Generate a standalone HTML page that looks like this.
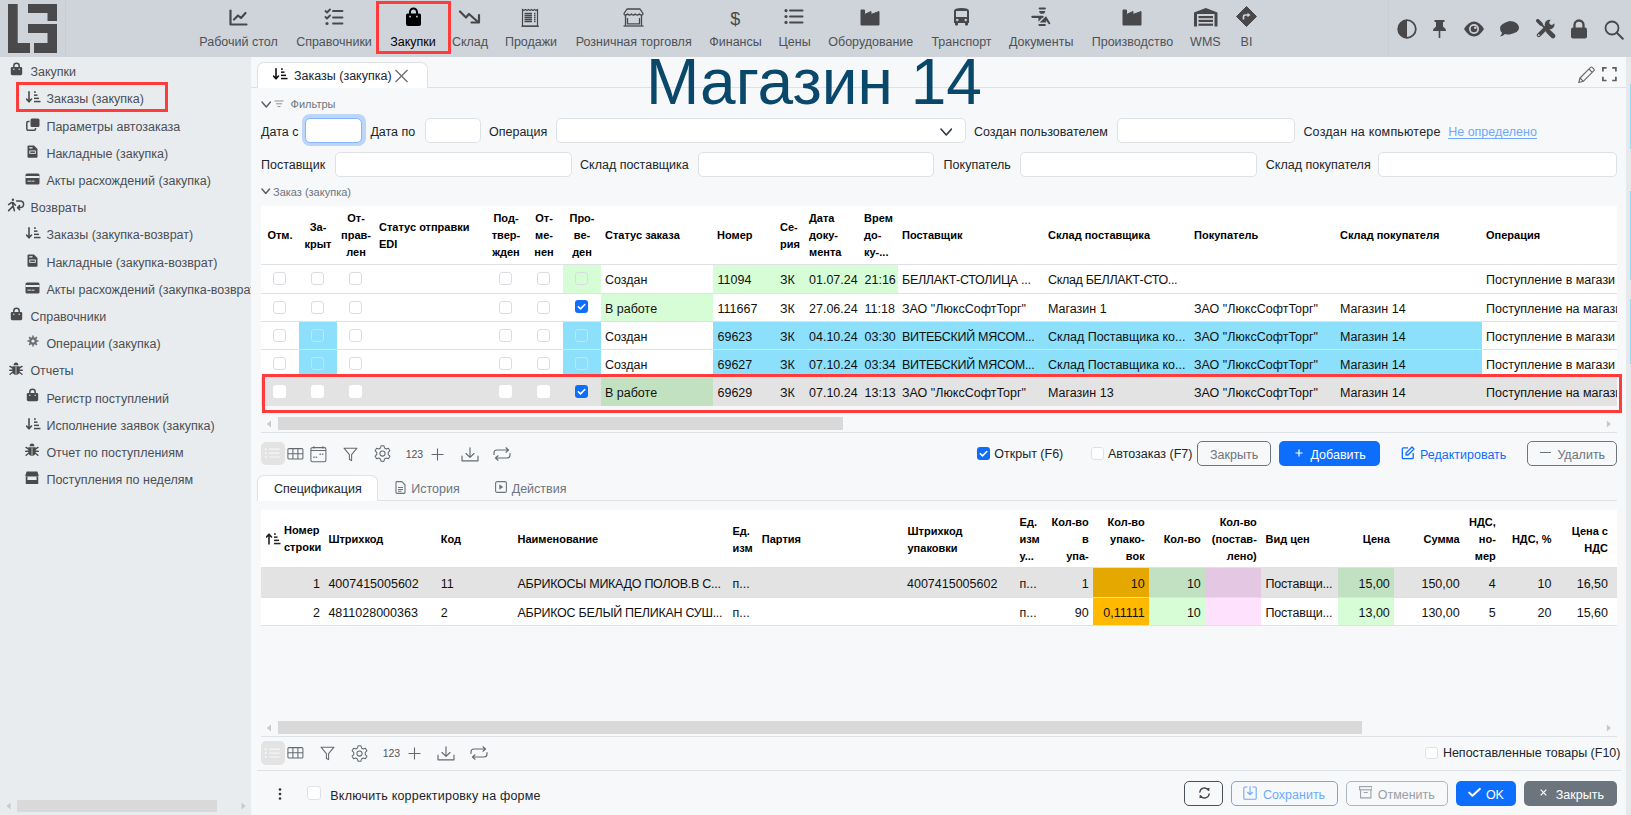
<!DOCTYPE html><html><head><meta charset="utf-8"><style>html,body{margin:0;padding:0;width:1631px;height:815px;overflow:hidden;position:relative;background:#f7f8fa;font-family:"Liberation Sans",sans-serif}.t{position:absolute;white-space:nowrap}.r{position:absolute}</style></head><body><div class="r" style="left:0px;top:0px;width:1631px;height:57px;background:#cfd4db;"></div><div class="r" style="left:0px;top:57px;width:251px;height:758px;background:#e9ecef;"></div><div class="r" style="left:251px;top:57px;width:1375px;height:758px;background:#f7f8fa;"></div><div class="r" style="left:1626px;top:57px;width:5px;height:758px;background:#e6e9ec;"></div><div class="r" style="left:1629.5px;top:84px;width:1.5px;height:65px;background:#8fdcf5;"></div><div class="r" style="left:1629.5px;top:191px;width:1.5px;height:89px;background:#8fdcf5;"></div><div class="r" style="left:1629.5px;top:299px;width:1.5px;height:65px;background:#8fdcf5;"></div><div class="r" style="left:65px;top:0px;width:1px;height:57px;background:#c9ced5;"></div><div class="r" style="left:1388px;top:0px;width:1px;height:57px;background:#c9ced5;"></div><svg class="r" style="left:8px;top:4px;" width="50" height="50" viewBox="0 0 50 50"><g fill="#4a4a4c"><rect x="0" y="0" width="9.7" height="49"/><rect x="0" y="39" width="22" height="10"/><rect x="20" y="0" width="29" height="9"/><rect x="39.5" y="0" width="9.5" height="17"/><rect x="20" y="20" width="29" height="9"/><rect x="39.5" y="20" width="9.5" height="29"/><rect x="26" y="39" width="23" height="10"/></g></svg><div class="t" style="left:168.50px;width:140px;text-align:center;top:35.92px;font-size:12.5px;line-height:12.5px;color:#4d5156;">Рабочий стол</div><div class="t" style="left:264.00px;width:140px;text-align:center;top:35.92px;font-size:12.5px;line-height:12.5px;color:#4d5156;">Справочники</div><div class="t" style="left:343.00px;width:140px;text-align:center;top:35.92px;font-size:12.5px;line-height:12.5px;color:#000;">Закупки</div><div class="t" style="left:400.00px;width:140px;text-align:center;top:35.92px;font-size:12.5px;line-height:12.5px;color:#4d5156;">Склад</div><div class="t" style="left:461.00px;width:140px;text-align:center;top:35.92px;font-size:12.5px;line-height:12.5px;color:#4d5156;">Продажи</div><div class="t" style="left:563.70px;width:140px;text-align:center;top:35.92px;font-size:12.5px;line-height:12.5px;color:#4d5156;">Розничная торговля</div><div class="t" style="left:665.50px;width:140px;text-align:center;top:35.92px;font-size:12.5px;line-height:12.5px;color:#4d5156;">Финансы</div><div class="t" style="left:724.60px;width:140px;text-align:center;top:35.92px;font-size:12.5px;line-height:12.5px;color:#4d5156;">Цены</div><div class="t" style="left:800.80px;width:140px;text-align:center;top:35.92px;font-size:12.5px;line-height:12.5px;color:#4d5156;">Оборудование</div><div class="t" style="left:891.50px;width:140px;text-align:center;top:35.92px;font-size:12.5px;line-height:12.5px;color:#4d5156;">Транспорт</div><div class="t" style="left:971.20px;width:140px;text-align:center;top:35.92px;font-size:12.5px;line-height:12.5px;color:#4d5156;">Документы</div><div class="t" style="left:1062.50px;width:140px;text-align:center;top:35.92px;font-size:12.5px;line-height:12.5px;color:#4d5156;">Производство</div><div class="t" style="left:1135.40px;width:140px;text-align:center;top:35.92px;font-size:12.5px;line-height:12.5px;color:#4d5156;">WMS</div><div class="t" style="left:1176.50px;width:140px;text-align:center;top:35.92px;font-size:12.5px;line-height:12.5px;color:#4d5156;">BI</div><svg class="r" style="left:229px;top:9px;" width="19" height="17" viewBox="0 0 19 17"><g fill="none" stroke="#48484a" stroke-width="2.2" stroke-linecap="round" stroke-linejoin="round"><path d="M1.5 1.5V15.5H17.5"/><path d="M5 10.5L9 6.5L12 9L16.5 4"/></g></svg><svg class="r" style="left:324px;top:8px;" width="20" height="18" viewBox="0 0 20 18"><g fill="none" stroke="#48484a" stroke-width="1.8" stroke-linecap="round" stroke-linejoin="round"><path d="M1.5 3L3 4.5L6 1.5"/><path d="M1.5 9L3 10.5L6 7.5"/><path d="M9 3H18.5M9 9.5H18.5M9 15.5H18.5"/></g><circle cx="3" cy="15.5" r="1.6" fill="#48484a"/></svg><svg class="r" style="left:405px;top:7px;" width="17" height="20" viewBox="0 0 17 20"><path d="M5 7V5A3.5 3.5 0 0 1 12 5V7" fill="none" stroke="#000" stroke-width="2"/><path d="M1 8Q1 6.5 2.5 6.5H14.5Q16 6.5 16 8V17Q16 19 14 19H3Q1 19 1 17Z" fill="#000"/><rect x="4.3" y="8.8" width="1.6" height="1.6" fill="#cfd4db"/><rect x="11.1" y="8.8" width="1.6" height="1.6" fill="#cfd4db"/></svg><svg class="r" style="left:458px;top:9px;" width="24" height="16" viewBox="0 0 24 16"><g fill="none" stroke="#48484a" stroke-width="2.2" stroke-linecap="round" stroke-linejoin="round"><path d="M2 2.5L8 8.5L11 5L20 13"/><path d="M13.5 13.5H21V6"/></g></svg><svg class="r" style="left:521px;top:8px;" width="19" height="19" viewBox="0 0 19 19"><g fill="none" stroke="#48484a" stroke-width="1.2"><path d="M1.5 1.5L3 2.5L4.5 1.5L6 2.5L7.5 1.5L9 2.5L10.5 1.5L12 2.5L13.5 1.5L15 2.5L16.5 1.5V18H1.5Z"/></g><g stroke="#48484a" stroke-width="1.3"><path d="M3.5 5.5H11M3.5 7.5H11M3.5 9.5H11M3.5 11.5H11M3.5 13.5H11M13 5.5H14.5M13 7.5H14.5M13 9.5H14.5M13 11.5H14.5M13 13.5H14.5"/></g><path d="M0.5 18.3H18" stroke="#48484a" stroke-width="1.2"/></svg><svg class="r" style="left:623px;top:8px;" width="21" height="19" viewBox="0 0 21 19"><g fill="none" stroke="#48484a" stroke-width="1.3" stroke-linejoin="round"><path d="M4 1H17L20 5.5Q20 7 18.3 7Q16.8 7 16.5 5.8Q16 7 14.3 7Q12.5 7 12.2 5.8Q11.8 7 10.5 7Q8.8 7 8.5 5.8Q8.2 7 6.5 7Q5 7 4.6 5.8Q4.2 7 2.6 7Q1 7 1 5.5Z"/><path d="M2.5 7V17.8M18.5 7V17.8M4.5 10V15.8H16.5V10"/><path d="M0.5 18H20.5"/></g></svg><div class="t" style="left:720.30px;width:30px;text-align:center;top:9.86px;font-size:18px;line-height:18px;color:#48484a;">$</div><svg class="r" style="left:784px;top:8px;" width="21" height="18" viewBox="0 0 21 18"><g fill="#48484a"><circle cx="2" cy="2.6" r="1.6"/><circle cx="2" cy="8.5" r="1.6"/><circle cx="2" cy="14.4" r="1.6"/></g><g stroke="#48484a" stroke-width="2" stroke-linecap="round"><path d="M6 2.6H18.5M6 8.5H18.5M6 14.4H18.5"/></g></svg><svg class="r" style="left:860px;top:8.5px;" width="21" height="17" viewBox="0 0 21 17"><path d="M1 1H4.5V5.5L11 2.5V5.5L19 2.5V16H1Z" fill="#48484a" stroke="#48484a" stroke-width="1" stroke-linejoin="round"/></svg><svg class="r" style="left:951.5px;top:7px;" width="19" height="20" viewBox="0 0 19 20"><path d="M2 4Q2 1 9.5 1Q17 1 17 4V16H2Z" fill="#48484a"/><rect x="4" y="4" width="11" height="6" fill="#cfd4db"/><circle cx="5.3" cy="13" r="1.2" fill="#cfd4db"/><circle cx="13.7" cy="13" r="1.2" fill="#cfd4db"/><rect x="3" y="15" width="3" height="3.5" rx="1" fill="#48484a"/><rect x="13" y="15" width="3" height="3.5" rx="1" fill="#48484a"/></svg><svg class="r" style="left:1026px;top:3px;" width="26" height="26" viewBox="0 0 26 26"><g fill="#48484a"><rect x="12.6" y="4.6" width="7.3" height="2" rx="1"/><path d="M13.1 7.9H19.2Q19 10.8 16.15 10.8Q13.3 10.8 13.1 7.9Z"/><rect x="5.3" y="12.7" width="12.3" height="2.2" rx="1.1"/><path d="M12.4 14.5L17.6 13.2L12.5 18.8Z"/><path d="M13.6 19.6L20 13.3L24.4 20.3Q24.3 21.6 22.9 21.3L19.9 17.2V19.6Z"/><rect x="12.4" y="21" width="7.5" height="2" rx="1"/></g></svg><svg class="r" style="left:1121.5px;top:8.5px;" width="21" height="17" viewBox="0 0 21 17"><path d="M1 1H4.5V5.5L11 2.5V5.5L19 2.5V16H1Z" fill="#48484a" stroke="#48484a" stroke-width="1" stroke-linejoin="round"/></svg><svg class="r" style="left:1192.5px;top:7px;" width="26" height="20" viewBox="0 0 26 20"><path d="M1 5.5L12.8 1L24.5 5.5V19.5H21.5V7H4V19.5H1Z" fill="#48484a"/><g fill="#48484a"><rect x="5.5" y="9" width="14.5" height="2.2"/><rect x="5.5" y="12.8" width="14.5" height="2.2"/><rect x="5.5" y="16.6" width="14.5" height="2.2"/></g></svg><svg class="r" style="left:1235.5px;top:6px;" width="21" height="21" viewBox="0 0 21 21"><path d="M10.5 0.5L20.5 10.5L10.5 20.5L0.5 10.5Z" fill="#48484a" stroke="#48484a" stroke-linejoin="round"/><path d="M7.5 13.5V10.5Q7.5 9 9 9H12" fill="none" stroke="#cfd4db" stroke-width="1.7"/><path d="M11.5 6.8L14.5 9L11.5 11.2Z" fill="#cfd4db"/></svg><div class="r" style="left:376px;top:1px;width:75px;height:53px;border:3px solid #ff3b3b;box-sizing:border-box;"></div><svg class="r" style="left:1397px;top:19px;" width="20" height="20" viewBox="0 0 20 20"><circle cx="10" cy="10" r="8.8" fill="none" stroke="#48484a" stroke-width="1.8"/><path d="M10 1.2A8.8 8.8 0 0 0 10 18.8Z" fill="#48484a"/></svg><svg class="r" style="left:1432px;top:19px;" width="15" height="20" viewBox="0 0 15 20"><path d="M2.5 1H12.5V3H11V7.5Q14 9.5 14 12H1Q1 9.5 4 7.5V3H2.5Z" fill="#48484a"/><rect x="6.7" y="12" width="1.6" height="7" fill="#48484a"/></svg><svg class="r" style="left:1462.5px;top:20px;" width="22" height="18" viewBox="0 0 22 18"><path d="M1 9Q5.5 1.5 11 1.5Q16.5 1.5 21 9Q16.5 16.5 11 16.5Q5.5 16.5 1 9Z" fill="#48484a"/><circle cx="11" cy="9" r="5" fill="#cfd4db"/><circle cx="11" cy="9" r="3.3" fill="#48484a"/><circle cx="12.3" cy="7.8" r="1.3" fill="#cfd4db"/></svg><svg class="r" style="left:1499px;top:20px;" width="21" height="18" viewBox="0 0 21 18"><path d="M10.5 1C16 1 20 4 20 8Q20 12.5 10.5 14.5Q8 14.5 6 14Q4 16 1 16.5Q3 14.5 3 12.8Q1 11 1 8Q1 4 10.5 1Z" fill="#48484a"/></svg><svg class="r" style="left:1535.5px;top:19px;" width="20" height="20" viewBox="0 0 20 20"><g stroke="#48484a" stroke-linecap="round" fill="none"><path d="M1.8 1.8L5 5" stroke-width="3.6"/><path d="M5 5L10 10" stroke-width="1.8"/><path d="M12.3 12.3L17 17" stroke-width="4.6"/><path d="M10.5 8.5L2.8 16.2" stroke-width="4"/></g><circle cx="2.8" cy="16.2" r="0.9" fill="#cfd4db"/><circle cx="13.6" cy="5.6" r="4.9" fill="#48484a"/><circle cx="15.6" cy="3.6" r="2.3" fill="#cfd4db"/><path d="M15.6 3.6L20 -0.8" stroke="#cfd4db" stroke-width="4.6"/></svg><svg class="r" style="left:1570px;top:19px;" width="18" height="20" viewBox="0 0 18 20"><path d="M4.5 9V6A4.5 4.5 0 0 1 13.5 6V9" fill="none" stroke="#48484a" stroke-width="2.3"/><rect x="1" y="8.5" width="16" height="11" rx="2" fill="#48484a"/></svg><svg class="r" style="left:1603.5px;top:19.5px;" width="20" height="20" viewBox="0 0 20 20"><circle cx="8" cy="8" r="6.5" fill="none" stroke="#48484a" stroke-width="1.8"/><path d="M12.8 12.8L18.8 18.8" stroke="#48484a" stroke-width="2" stroke-linecap="round"/></svg><div class="r" style="left:0;top:57px;width:251px;height:735px;overflow:hidden"><div class="t" style="left:30.40px;top:9.12px;font-size:12.5px;line-height:12.5px;color:#4a4f55;">Закупки</div><svg class="r" style="left:10px;top:4.900000000000006px;" width="13" height="14" viewBox="0 0 13 14"><path d="M3.8 5.5V4A2.7 2.7 0 0 1 9.2 4V5.5" fill="none" stroke="#4a4a4c" stroke-width="1.5"/><path d="M0.8 6.3Q0.8 5 2 5H11Q12.2 5 12.2 6.3V11.8Q12.2 13.2 10.8 13.2H2.2Q0.8 13.2 0.8 11.8Z" fill="#4a4a4c"/><rect x="3.2" y="6.7" width="1.2" height="1.2" fill="#e9ecef"/><rect x="8.6" y="6.7" width="1.2" height="1.2" fill="#e9ecef"/></svg><div class="t" style="left:46.40px;top:36.32px;font-size:12.5px;line-height:12.5px;color:#4a4f55;">Заказы (закупка)</div><svg class="r" style="left:25.5px;top:34.10000000000001px;" width="15" height="12" viewBox="0 0 15 12"><path d="M3 0.8V10.5M0.5 8L3 10.8L5.5 8" fill="none" stroke="#4a4a4c" stroke-width="1.6" stroke-linecap="round" stroke-linejoin="round"/><g fill="#4a4a4c"><rect x="8" y="0.3" width="1.8" height="1.5"/><rect x="8" y="3.4" width="3.5" height="1.5"/><rect x="8" y="6.6" width="5" height="1.5"/><rect x="8" y="9.8" width="6.5" height="1.5"/></g></svg><div class="t" style="left:46.40px;top:63.52px;font-size:12.5px;line-height:12.5px;color:#4a4f55;">Параметры автозаказа</div><svg class="r" style="left:25.5px;top:60.80000000000001px;" width="14" height="13" viewBox="0 0 14 13"><rect x="4.5" y="0.5" width="9" height="8.5" rx="1.5" fill="#4a4a4c"/><path d="M3.5 3.5H2Q0.8 3.5 0.8 4.8V11Q0.8 12.3 2 12.3H8.2Q9.5 12.3 9.5 11V10" fill="none" stroke="#4a4a4c" stroke-width="1.5"/></svg><div class="t" style="left:46.40px;top:90.72px;font-size:12.5px;line-height:12.5px;color:#4a4f55;">Накладные (закупка)</div><svg class="r" style="left:27.0px;top:88.0px;" width="11" height="13" viewBox="0 0 11 13"><path d="M0.5 1.5Q0.5 0.5 1.5 0.5H7L10.5 4V11.8Q10.5 12.8 9.5 12.8H1.5Q0.5 12.8 0.5 11.8Z" fill="#4a4a4c"/><rect x="2.3" y="5.5" width="6.5" height="3.3" fill="#e9ecef"/><rect x="3.2" y="6.4" width="4.7" height="1.5" fill="#4a4a4c"/><rect x="2.3" y="2.2" width="3.2" height="1.3" fill="#e9ecef"/></svg><div class="t" style="left:46.40px;top:117.92px;font-size:12.5px;line-height:12.5px;color:#4a4f55;">Акты расхождений (закупка)</div><svg class="r" style="left:24.5px;top:115.69999999999999px;" width="15" height="12" viewBox="0 0 15 12"><rect x="0.5" y="0.5" width="14" height="11" rx="1.5" fill="#4a4a4c"/><rect x="0.5" y="3" width="14" height="2" fill="#e9ecef"/><rect x="2.5" y="7.5" width="4" height="1.5" fill="#e9ecef" opacity="0.6"/><rect x="7" y="7.5" width="2.5" height="1.5" fill="#e9ecef" opacity="0.6"/></svg><div class="t" style="left:30.40px;top:145.12px;font-size:12.5px;line-height:12.5px;color:#4a4f55;">Возвраты</div><svg class="r" style="left:5px;top:138.3px;" width="24" height="20" viewBox="0 0 24 20"><circle cx="7.9" cy="4.7" r="1.2" fill="#4a4a4c"/><g fill="none" stroke="#4a4a4c" stroke-width="1.5" stroke-linecap="round" stroke-linejoin="round"><path d="M3.6 9.6L6.3 7.6H8L10.4 10.3M7.3 7.8L8.4 12L9.4 15.8M7.6 11.6L3.6 15.6"/><path d="M11.6 6H15Q18.6 6 18.6 9.3Q18.6 12.6 15 12.6H12.6M14.6 10.6L12.6 12.6L14.6 14.6"/></g></svg><div class="t" style="left:46.40px;top:172.32px;font-size:12.5px;line-height:12.5px;color:#4a4f55;">Заказы (закупка-возврат)</div><svg class="r" style="left:25.5px;top:170.1px;" width="15" height="12" viewBox="0 0 15 12"><path d="M3 0.8V10.5M0.5 8L3 10.8L5.5 8" fill="none" stroke="#4a4a4c" stroke-width="1.6" stroke-linecap="round" stroke-linejoin="round"/><g fill="#4a4a4c"><rect x="8" y="0.3" width="1.8" height="1.5"/><rect x="8" y="3.4" width="3.5" height="1.5"/><rect x="8" y="6.6" width="5" height="1.5"/><rect x="8" y="9.8" width="6.5" height="1.5"/></g></svg><div class="t" style="left:46.40px;top:199.52px;font-size:12.5px;line-height:12.5px;color:#4a4f55;">Накладные (закупка-возврат)</div><svg class="r" style="left:27.0px;top:196.8px;" width="11" height="13" viewBox="0 0 11 13"><path d="M0.5 1.5Q0.5 0.5 1.5 0.5H7L10.5 4V11.8Q10.5 12.8 9.5 12.8H1.5Q0.5 12.8 0.5 11.8Z" fill="#4a4a4c"/><rect x="2.3" y="5.5" width="6.5" height="3.3" fill="#e9ecef"/><rect x="3.2" y="6.4" width="4.7" height="1.5" fill="#4a4a4c"/><rect x="2.3" y="2.2" width="3.2" height="1.3" fill="#e9ecef"/></svg><div class="t" style="left:46.40px;top:226.72px;font-size:12.5px;line-height:12.5px;color:#4a4f55;">Акты расхождений (закупка-возврат)</div><svg class="r" style="left:24.5px;top:224.5px;" width="15" height="12" viewBox="0 0 15 12"><rect x="0.5" y="0.5" width="14" height="11" rx="1.5" fill="#4a4a4c"/><rect x="0.5" y="3" width="14" height="2" fill="#e9ecef"/><rect x="2.5" y="7.5" width="4" height="1.5" fill="#e9ecef" opacity="0.6"/><rect x="7" y="7.5" width="2.5" height="1.5" fill="#e9ecef" opacity="0.6"/></svg><div class="t" style="left:30.40px;top:253.92px;font-size:12.5px;line-height:12.5px;color:#4a4f55;">Справочники</div><svg class="r" style="left:10px;top:249.7px;" width="13" height="14" viewBox="0 0 13 14"><path d="M3.8 5.5V4A2.7 2.7 0 0 1 9.2 4V5.5" fill="none" stroke="#4a4a4c" stroke-width="1.5"/><path d="M0.8 6.3Q0.8 5 2 5H11Q12.2 5 12.2 6.3V11.8Q12.2 13.2 10.8 13.2H2.2Q0.8 13.2 0.8 11.8Z" fill="#4a4a4c"/><rect x="3.2" y="6.7" width="1.2" height="1.2" fill="#e9ecef"/><rect x="8.6" y="6.7" width="1.2" height="1.2" fill="#e9ecef"/></svg><div class="t" style="left:46.40px;top:281.12px;font-size:12.5px;line-height:12.5px;color:#4a4f55;">Операции (закупка)</div><svg class="r" style="left:26.5px;top:278.4px;" width="12" height="12" viewBox="0 0 12 12"><g fill="#6b6f74"><circle cx="6" cy="6" r="3.8"/><g stroke="#6b6f74" stroke-width="1.6"><path d="M6 0.5V11.5M0.5 6H11.5M2.1 2.1L9.9 9.9M9.9 2.1L2.1 9.9"/></g></g><circle cx="6" cy="6" r="1.6" fill="#e9ecef"/></svg><div class="t" style="left:30.40px;top:308.32px;font-size:12.5px;line-height:12.5px;color:#4a4f55;">Отчеты</div><svg class="r" style="left:9px;top:304.6px;" width="14" height="13.5" viewBox="0 0 14 13.5"><path d="M4.6 3.3Q4.6 0.5 7 0.5Q9.4 0.5 9.4 3.3Z" fill="#4a4a4c"/><path d="M3.3 4.2H10.7V8.3Q10.7 12.9 7 12.9Q3.3 12.9 3.3 8.3Z" fill="#4a4a4c"/><g stroke="#4a4a4c" stroke-width="1.4" stroke-linecap="round"><path d="M1 4.4L3.4 5.9M13 4.4L10.6 5.9M0.7 8.3H3.4M13.3 8.3H10.6M1.1 12.2L3.7 10.2M12.9 12.2L10.3 10.2"/></g><path d="M7 4.6V12.6" stroke="#e9ecef" stroke-width="0.7"/></svg><div class="t" style="left:46.40px;top:335.52px;font-size:12.5px;line-height:12.5px;color:#4a4f55;">Регистр поступлений</div><svg class="r" style="left:26.0px;top:331.29999999999995px;" width="13" height="14" viewBox="0 0 13 14"><path d="M3.8 5.5V4A2.7 2.7 0 0 1 9.2 4V5.5" fill="none" stroke="#4a4a4c" stroke-width="1.5"/><path d="M0.8 6.3Q0.8 5 2 5H11Q12.2 5 12.2 6.3V11.8Q12.2 13.2 10.8 13.2H2.2Q0.8 13.2 0.8 11.8Z" fill="#4a4a4c"/><rect x="3.2" y="6.7" width="1.2" height="1.2" fill="#e9ecef"/><rect x="8.6" y="6.7" width="1.2" height="1.2" fill="#e9ecef"/></svg><div class="t" style="left:46.40px;top:362.72px;font-size:12.5px;line-height:12.5px;color:#4a4f55;">Исполнение заявок (закупка)</div><svg class="r" style="left:25.5px;top:360.5px;" width="15" height="12" viewBox="0 0 15 12"><path d="M3 0.8V10.5M0.5 8L3 10.8L5.5 8" fill="none" stroke="#4a4a4c" stroke-width="1.6" stroke-linecap="round" stroke-linejoin="round"/><g fill="#4a4a4c"><rect x="8" y="0.3" width="1.8" height="1.5"/><rect x="8" y="3.4" width="3.5" height="1.5"/><rect x="8" y="6.6" width="5" height="1.5"/><rect x="8" y="9.8" width="6.5" height="1.5"/></g></svg><div class="t" style="left:46.40px;top:389.92px;font-size:12.5px;line-height:12.5px;color:#4a4f55;">Отчет по поступлениям</div><svg class="r" style="left:24.5px;top:386.20000000000005px;" width="14" height="13.5" viewBox="0 0 14 13.5"><path d="M4.6 3.3Q4.6 0.5 7 0.5Q9.4 0.5 9.4 3.3Z" fill="#4a4a4c"/><path d="M3.3 4.2H10.7V8.3Q10.7 12.9 7 12.9Q3.3 12.9 3.3 8.3Z" fill="#4a4a4c"/><g stroke="#4a4a4c" stroke-width="1.4" stroke-linecap="round"><path d="M1 4.4L3.4 5.9M13 4.4L10.6 5.9M0.7 8.3H3.4M13.3 8.3H10.6M1.1 12.2L3.7 10.2M12.9 12.2L10.3 10.2"/></g><path d="M7 4.6V12.6" stroke="#e9ecef" stroke-width="0.7"/></svg><div class="t" style="left:46.40px;top:417.12px;font-size:12.5px;line-height:12.5px;color:#4a4f55;">Поступления по неделям</div><svg class="r" style="left:25.0px;top:413.9px;" width="14" height="13.5" viewBox="0 0 14 13.5"><path d="M1.6 0.5H12.4L13.6 4.2Q13.6 5.4 12.3 5.4H1.7Q0.4 5.4 0.4 4.2Z" fill="#4a4a4c"/><path d="M1.6 5.5V12.6H12.4V5.5" fill="none" stroke="#4a4a4c" stroke-width="1.7"/><rect x="1.6" y="9" width="10.8" height="3.6" fill="#4a4a4c"/></svg></div><div class="r" style="left:16.3px;top:82.2px;width:152px;height:29.4px;border:3px solid #ff3b3b;box-sizing:border-box;"></div><div class="r" style="left:16.8px;top:799.5px;width:200.5px;height:12.7px;background:#d9d9d9;"></div><svg class="r" style="left:6px;top:802px;" width="5" height="8" viewBox="0 0 5 8"><path d="M4.5 0.5V7.5L0.5 4Z" fill="#c8c8c8"/></svg><svg class="r" style="left:241px;top:802px;" width="5" height="8" viewBox="0 0 5 8"><path d="M0.5 0.5V7.5L4.5 4Z" fill="#c8c8c8"/></svg><div class="r" style="left:251px;top:87px;width:1375px;height:1px;background:#dee2e6;"></div><div class="r" style="left:257px;top:62px;width:171px;height:26px;background:#fff;border:1px solid #dee2e6;border-bottom:none;border-radius:7px 7px 0 0;box-sizing:border-box"></div><svg class="r" style="left:273.4px;top:68px;" width="15" height="12" viewBox="0 0 15 12"><path d="M3 0.8V10.5M0.5 8L3 10.8L5.5 8" fill="none" stroke="#111" stroke-width="1.6" stroke-linecap="round" stroke-linejoin="round"/><g fill="#111"><rect x="8" y="0.3" width="1.8" height="1.5"/><rect x="8" y="3.4" width="3.5" height="1.5"/><rect x="8" y="6.6" width="5" height="1.5"/><rect x="8" y="9.8" width="6.5" height="1.5"/></g></svg><div class="t" style="left:294.00px;top:70.32px;font-size:12.5px;line-height:12.5px;color:#212529;">Заказы (закупка)</div><svg class="r" style="left:394px;top:68.5px;" width="15" height="14" viewBox="0 0 15 14"><path d="M1.5 1L13.5 13M13.5 1L1.5 13" stroke="#6f6f6f" stroke-width="1.4"/></svg><svg class="r" style="left:1578px;top:65.5px;" width="17.5" height="17.5" viewBox="0 0 17.5 17.5"><g fill="none" stroke="#666" stroke-width="1.1" stroke-linejoin="round"><path d="M0.8 16.5L2 12L12.6 1.4Q13.4 0.6 14.2 1.4L15.9 3.1Q16.7 3.9 15.9 4.7L5.3 15.3Z"/><path d="M11 3L14.3 6.3M2 12L5.3 15.3"/></g></svg><svg class="r" style="left:1602.3px;top:67px;" width="15" height="15" viewBox="0 0 15 15"><path d="M0.9 4.6V0.9H4.6M10.2 0.9H13.9V4.6M13.9 9.8V13.5H10.2M4.6 13.5H0.9V9.8" fill="none" stroke="#585d63" stroke-width="1.7"/></svg><div class="t" style="left:646px;top:50px;font-size:64px;line-height:64px;color:#09486a">Магазин 14</div><svg class="r" style="left:260.5px;top:100.5px;" width="10.5" height="7" viewBox="0 0 10.5 7"><path d="M1 1L5.25 6L9.5 1" fill="none" stroke="#5a6068" stroke-width="1.5" stroke-linecap="round" stroke-linejoin="round"/></svg><svg class="r" style="left:274px;top:100px;" width="10" height="8" viewBox="0 0 10 8"><path d="M0.5 1H9.5M2 3.8H8M3.5 6.6H6.5" stroke="#8a9096" stroke-width="1"/></svg><div class="t" style="left:290.60px;top:99.19px;font-size:11px;line-height:11px;color:#6c757d;">Фильтры</div><div class="t" style="left:261.00px;top:126.32px;font-size:12.5px;line-height:12.5px;color:#212529;">Дата с</div><div class="r" style="left:301.5px;top:114.1px;width:64px;height:32.2px;background:rgba(13,110,253,0.25);border-radius:8px;"></div><div class="r" style="left:305px;top:117.8px;width:57px;height:25px;background:#fff;border:1px solid #86b7fe;box-sizing:border-box;border-radius:5px;"></div><div class="t" style="left:370.40px;top:126.32px;font-size:12.5px;line-height:12.5px;color:#212529;">Дата по</div><div class="r" style="left:424.7px;top:117.8px;width:56px;height:25px;background:#fff;border:1px solid #dee2e6;box-sizing:border-box;border-radius:5px;"></div><div class="t" style="left:489.00px;top:126.32px;font-size:12.5px;line-height:12.5px;color:#212529;">Операция</div><div class="r" style="left:556.2px;top:117.8px;width:409.5px;height:25px;background:#fff;border:1px solid #dee2e6;box-sizing:border-box;border-radius:5px;"></div><svg class="r" style="left:939.5px;top:127.5px;" width="12.5" height="8" viewBox="0 0 12.5 8"><path d="M1 1L6.25 7L11.5 1" fill="none" stroke="#343a40" stroke-width="1.6" stroke-linecap="round" stroke-linejoin="round"/></svg><div class="t" style="left:974.00px;top:126.32px;font-size:12.5px;line-height:12.5px;color:#212529;">Создан пользователем</div><div class="r" style="left:1117.3px;top:117.8px;width:178px;height:25px;background:#fff;border:1px solid #dee2e6;box-sizing:border-box;border-radius:5px;"></div><div class="t" style="left:1303.40px;top:126.32px;font-size:12.5px;line-height:12.5px;color:#212529;letter-spacing:0.2px">Создан на компьютере</div><div class="t" style="left:1448.20px;top:126.32px;font-size:12.5px;line-height:12.5px;color:#6ea8fe;text-decoration:underline;text-underline-offset:1.5px">Не определено</div><div class="t" style="left:261.00px;top:159.12px;font-size:12.5px;line-height:12.5px;color:#212529;">Поставщик</div><div class="r" style="left:334.5px;top:151.5px;width:237px;height:25px;background:#fff;border:1px solid #dee2e6;box-sizing:border-box;border-radius:5px;"></div><div class="t" style="left:580.00px;top:159.12px;font-size:12.5px;line-height:12.5px;color:#212529;">Склад поставщика</div><div class="r" style="left:697.6px;top:151.5px;width:236.7px;height:25px;background:#fff;border:1px solid #dee2e6;box-sizing:border-box;border-radius:5px;"></div><div class="t" style="left:943.60px;top:159.12px;font-size:12.5px;line-height:12.5px;color:#212529;">Покупатель</div><div class="r" style="left:1019.6px;top:151.5px;width:237.7px;height:25px;background:#fff;border:1px solid #dee2e6;box-sizing:border-box;border-radius:5px;"></div><div class="t" style="left:1265.80px;top:159.12px;font-size:12.5px;line-height:12.5px;color:#212529;">Склад покупателя</div><div class="r" style="left:1378.2px;top:151.5px;width:238.4px;height:25px;background:#fff;border:1px solid #dee2e6;box-sizing:border-box;border-radius:5px;"></div><svg class="r" style="left:261px;top:187.5px;" width="9.5" height="6.5" viewBox="0 0 9.5 6.5"><path d="M1 1L4.75 5.5L8.5 1" fill="none" stroke="#5a6068" stroke-width="1.5" stroke-linecap="round" stroke-linejoin="round"/></svg><div class="t" style="left:273.00px;top:187.19px;font-size:11px;line-height:11px;color:#6c757d;">Заказ (закупка)</div><div class="r" style="left:261px;top:206px;width:1356px;height:199px;background:#fff;"></div><div class="t" style="left:260.00px;width:40px;text-align:center;top:230.09px;font-size:11px;line-height:11px;color:#000;font-weight:700;">Отм.</div><div class="t" style="left:298.00px;width:40px;text-align:center;top:221.59px;font-size:11px;line-height:11px;color:#000;font-weight:700;">За-</div><div class="t" style="left:298.00px;width:40px;text-align:center;top:238.59px;font-size:11px;line-height:11px;color:#000;font-weight:700;">крыт</div><div class="t" style="left:336.00px;width:40px;text-align:center;top:213.09px;font-size:11px;line-height:11px;color:#000;font-weight:700;">От-</div><div class="t" style="left:336.00px;width:40px;text-align:center;top:230.09px;font-size:11px;line-height:11px;color:#000;font-weight:700;">прав-</div><div class="t" style="left:336.00px;width:40px;text-align:center;top:247.09px;font-size:11px;line-height:11px;color:#000;font-weight:700;">лен</div><div class="t" style="left:379.00px;top:221.59px;font-size:11px;line-height:11px;color:#000;font-weight:700;">Статус отправки</div><div class="t" style="left:379.00px;top:238.59px;font-size:11px;line-height:11px;color:#000;font-weight:700;">EDI</div><div class="t" style="left:486.00px;width:40px;text-align:center;top:213.09px;font-size:11px;line-height:11px;color:#000;font-weight:700;">Под-</div><div class="t" style="left:486.00px;width:40px;text-align:center;top:230.09px;font-size:11px;line-height:11px;color:#000;font-weight:700;">твер-</div><div class="t" style="left:486.00px;width:40px;text-align:center;top:247.09px;font-size:11px;line-height:11px;color:#000;font-weight:700;">жден</div><div class="t" style="left:524.00px;width:40px;text-align:center;top:213.09px;font-size:11px;line-height:11px;color:#000;font-weight:700;">От-</div><div class="t" style="left:524.00px;width:40px;text-align:center;top:230.09px;font-size:11px;line-height:11px;color:#000;font-weight:700;">ме-</div><div class="t" style="left:524.00px;width:40px;text-align:center;top:247.09px;font-size:11px;line-height:11px;color:#000;font-weight:700;">нен</div><div class="t" style="left:562.00px;width:40px;text-align:center;top:213.09px;font-size:11px;line-height:11px;color:#000;font-weight:700;">Про-</div><div class="t" style="left:562.00px;width:40px;text-align:center;top:230.09px;font-size:11px;line-height:11px;color:#000;font-weight:700;">ве-</div><div class="t" style="left:562.00px;width:40px;text-align:center;top:247.09px;font-size:11px;line-height:11px;color:#000;font-weight:700;">ден</div><div class="t" style="left:605.00px;top:230.09px;font-size:11px;line-height:11px;color:#000;font-weight:700;">Статус заказа</div><div class="t" style="left:717.00px;top:230.09px;font-size:11px;line-height:11px;color:#000;font-weight:700;">Номер</div><div class="t" style="left:780.00px;top:221.59px;font-size:11px;line-height:11px;color:#000;font-weight:700;">Се-</div><div class="t" style="left:780.00px;top:238.59px;font-size:11px;line-height:11px;color:#000;font-weight:700;">рия</div><div class="t" style="left:809.00px;top:213.09px;font-size:11px;line-height:11px;color:#000;font-weight:700;">Дата</div><div class="t" style="left:809.00px;top:230.09px;font-size:11px;line-height:11px;color:#000;font-weight:700;">доку-</div><div class="t" style="left:809.00px;top:247.09px;font-size:11px;line-height:11px;color:#000;font-weight:700;">мента</div><div class="t" style="left:864.00px;top:213.09px;font-size:11px;line-height:11px;color:#000;font-weight:700;">Врем</div><div class="t" style="left:864.00px;top:230.09px;font-size:11px;line-height:11px;color:#000;font-weight:700;">до-</div><div class="t" style="left:864.00px;top:247.09px;font-size:11px;line-height:11px;color:#000;font-weight:700;">ку-...</div><div class="t" style="left:902.00px;top:230.09px;font-size:11px;line-height:11px;color:#000;font-weight:700;">Поставщик</div><div class="t" style="left:1048.00px;top:230.09px;font-size:11px;line-height:11px;color:#000;font-weight:700;">Склад поставщика</div><div class="t" style="left:1194.00px;top:230.09px;font-size:11px;line-height:11px;color:#000;font-weight:700;">Покупатель</div><div class="t" style="left:1340.00px;top:230.09px;font-size:11px;line-height:11px;color:#000;font-weight:700;">Склад покупателя</div><div class="t" style="left:1486.00px;top:230.09px;font-size:11px;line-height:11px;color:#000;font-weight:700;">Операция</div><div class="r" style="left:261px;top:378px;width:1356px;height:28px;background:#e3e3e3;"></div><div class="r" style="left:563px;top:265px;width:38px;height:28px;background:#d7fdd7;"></div><div class="r" style="left:713px;top:265px;width:185px;height:28px;background:#d7fdd7;"></div><div class="r" style="left:601px;top:294px;width:112px;height:27px;background:#d7fdd7;"></div><div class="r" style="left:299px;top:322px;width:38px;height:27px;background:#8ce0fb;"></div><div class="r" style="left:563px;top:322px;width:38px;height:27px;background:#8ce0fb;"></div><div class="r" style="left:713px;top:322px;width:769px;height:27px;background:#8ce0fb;"></div><div class="r" style="left:299px;top:350px;width:38px;height:27px;background:#8ce0fb;"></div><div class="r" style="left:563px;top:350px;width:38px;height:27px;background:#8ce0fb;"></div><div class="r" style="left:713px;top:350px;width:769px;height:27px;background:#8ce0fb;"></div><div class="r" style="left:601px;top:378px;width:112px;height:28px;background:#c1e1c1;"></div><div class="r" style="left:700px;top:378px;width:13px;height:27px;background:#c1e1c1;"></div><div class="r" style="left:261px;top:264px;width:1356px;height:1px;background:#dee2e6;"></div><div class="r" style="left:261px;top:293px;width:1356px;height:1px;background:#dee2e6;"></div><div class="r" style="left:261px;top:321px;width:1356px;height:1px;background:#dee2e6;"></div><div class="r" style="left:261px;top:349px;width:1356px;height:1px;background:#dee2e6;"></div><div class="r" style="left:261px;top:377px;width:1356px;height:1px;background:#dee2e6;"></div><div class="r" style="left:272.9px;top:272.0px;width:13px;height:13px;border:1px solid #d9dde2;box-sizing:border-box;border-radius:3px;"></div><div class="r" style="left:310.9px;top:272.0px;width:13px;height:13px;border:1px solid #d9dde2;box-sizing:border-box;border-radius:3px;"></div><div class="r" style="left:348.9px;top:272.0px;width:13px;height:13px;border:1px solid #d9dde2;box-sizing:border-box;border-radius:3px;"></div><div class="r" style="left:498.9px;top:272.0px;width:13px;height:13px;border:1px solid #d9dde2;box-sizing:border-box;border-radius:3px;"></div><div class="r" style="left:536.9px;top:272.0px;width:13px;height:13px;border:1px solid #d9dde2;box-sizing:border-box;border-radius:3px;"></div><div class="r" style="left:574.9px;top:272.0px;width:13px;height:13px;border:1px solid #d9dde2;box-sizing:border-box;border-radius:3px;"></div><div class="t" style="left:605.00px;top:274.22px;font-size:12.5px;line-height:12.5px;color:#111;">Создан</div><div class="t" style="left:717.50px;top:274.22px;font-size:12.5px;line-height:12.5px;color:#111;">11094</div><div class="t" style="left:780.00px;top:274.22px;font-size:12.5px;line-height:12.5px;color:#111;">ЗК</div><div class="t" style="left:809.00px;top:274.22px;font-size:12.5px;line-height:12.5px;color:#111;">01.07.24</div><div class="t" style="left:864.50px;top:274.22px;font-size:12.5px;line-height:12.5px;color:#111;">21:16</div><div class="t" style="left:902.00px;top:274.22px;font-size:12.5px;line-height:12.5px;color:#111;letter-spacing:-0.3px">БЕЛЛАКТ-СТОЛИЦА ...</div><div class="t" style="left:1048.00px;top:274.22px;font-size:12.5px;line-height:12.5px;color:#111;letter-spacing:-0.33px">Склад БЕЛЛАКТ-СТО...</div><div class="t" style="left:1194.00px;top:274.22px;font-size:12.5px;line-height:12.5px;color:#111;"></div><div class="t" style="left:1340.00px;top:274.22px;font-size:12.5px;line-height:12.5px;color:#111;"></div><div class="r" style="left:272.9px;top:300.5px;width:13px;height:13px;border:1px solid #d9dde2;box-sizing:border-box;border-radius:3px;"></div><div class="r" style="left:310.9px;top:300.5px;width:13px;height:13px;border:1px solid #d9dde2;box-sizing:border-box;border-radius:3px;"></div><div class="r" style="left:348.9px;top:300.5px;width:13px;height:13px;border:1px solid #d9dde2;box-sizing:border-box;border-radius:3px;"></div><div class="r" style="left:498.9px;top:300.5px;width:13px;height:13px;border:1px solid #d9dde2;box-sizing:border-box;border-radius:3px;"></div><div class="r" style="left:536.9px;top:300.5px;width:13px;height:13px;border:1px solid #d9dde2;box-sizing:border-box;border-radius:3px;"></div><svg class="r" style="left:575.2px;top:300.2px;" width="13" height="13" viewBox="0 0 13 13"><rect x="0" y="0" width="13" height="13" rx="3" fill="#0d6efd"/><path d="M3.3 6.7L5.5 8.9L9.8 4.5" fill="none" stroke="#fff" stroke-width="1.6" stroke-linecap="round" stroke-linejoin="round"/></svg><div class="t" style="left:605.00px;top:302.72px;font-size:12.5px;line-height:12.5px;color:#111;">В работе</div><div class="t" style="left:717.50px;top:302.72px;font-size:12.5px;line-height:12.5px;color:#111;">111667</div><div class="t" style="left:780.00px;top:302.72px;font-size:12.5px;line-height:12.5px;color:#111;">ЗК</div><div class="t" style="left:809.00px;top:302.72px;font-size:12.5px;line-height:12.5px;color:#111;">27.06.24</div><div class="t" style="left:864.50px;top:302.72px;font-size:12.5px;line-height:12.5px;color:#111;">11:18</div><div class="t" style="left:902.00px;top:302.72px;font-size:12.5px;line-height:12.5px;color:#111;">ЗАО "ЛюксСофтТорг"</div><div class="t" style="left:1048.00px;top:302.72px;font-size:12.5px;line-height:12.5px;color:#111;">Магазин 1</div><div class="t" style="left:1194.00px;top:302.72px;font-size:12.5px;line-height:12.5px;color:#111;">ЗАО "ЛюксСофтТорг"</div><div class="t" style="left:1340.00px;top:302.72px;font-size:12.5px;line-height:12.5px;color:#111;">Магазин 14</div><div class="r" style="left:272.9px;top:328.5px;width:13px;height:13px;border:1px solid #d9dde2;box-sizing:border-box;border-radius:3px;"></div><div class="r" style="left:310.9px;top:328.5px;width:13px;height:13px;border:1px solid #d9dde2;box-sizing:border-box;border-radius:3px;"></div><div class="r" style="left:348.9px;top:328.5px;width:13px;height:13px;border:1px solid #d9dde2;box-sizing:border-box;border-radius:3px;"></div><div class="r" style="left:498.9px;top:328.5px;width:13px;height:13px;border:1px solid #d9dde2;box-sizing:border-box;border-radius:3px;"></div><div class="r" style="left:536.9px;top:328.5px;width:13px;height:13px;border:1px solid #d9dde2;box-sizing:border-box;border-radius:3px;"></div><div class="r" style="left:574.9px;top:328.5px;width:13px;height:13px;border:1px solid #d9dde2;box-sizing:border-box;border-radius:3px;"></div><div class="t" style="left:605.00px;top:330.92px;font-size:12.5px;line-height:12.5px;color:#111;">Создан</div><div class="t" style="left:717.50px;top:330.92px;font-size:12.5px;line-height:12.5px;color:#111;">69623</div><div class="t" style="left:780.00px;top:330.92px;font-size:12.5px;line-height:12.5px;color:#111;">ЗК</div><div class="t" style="left:809.00px;top:330.92px;font-size:12.5px;line-height:12.5px;color:#111;">04.10.24</div><div class="t" style="left:864.50px;top:330.92px;font-size:12.5px;line-height:12.5px;color:#111;">03:30</div><div class="t" style="left:902.00px;top:330.92px;font-size:12.5px;line-height:12.5px;color:#111;letter-spacing:-0.3px">ВИТЕБСКИЙ МЯСОМ...</div><div class="t" style="left:1048.00px;top:330.92px;font-size:12.5px;line-height:12.5px;color:#111;">Склад Поставщика ко...</div><div class="t" style="left:1194.00px;top:330.92px;font-size:12.5px;line-height:12.5px;color:#111;">ЗАО "ЛюксСофтТорг"</div><div class="t" style="left:1340.00px;top:330.92px;font-size:12.5px;line-height:12.5px;color:#111;">Магазин 14</div><div class="r" style="left:272.9px;top:356.5px;width:13px;height:13px;border:1px solid #d9dde2;box-sizing:border-box;border-radius:3px;"></div><div class="r" style="left:310.9px;top:356.5px;width:13px;height:13px;border:1px solid #d9dde2;box-sizing:border-box;border-radius:3px;"></div><div class="r" style="left:348.9px;top:356.5px;width:13px;height:13px;border:1px solid #d9dde2;box-sizing:border-box;border-radius:3px;"></div><div class="r" style="left:498.9px;top:356.5px;width:13px;height:13px;border:1px solid #d9dde2;box-sizing:border-box;border-radius:3px;"></div><div class="r" style="left:536.9px;top:356.5px;width:13px;height:13px;border:1px solid #d9dde2;box-sizing:border-box;border-radius:3px;"></div><div class="r" style="left:574.9px;top:356.5px;width:13px;height:13px;border:1px solid #d9dde2;box-sizing:border-box;border-radius:3px;"></div><div class="t" style="left:605.00px;top:358.92px;font-size:12.5px;line-height:12.5px;color:#111;">Создан</div><div class="t" style="left:717.50px;top:358.92px;font-size:12.5px;line-height:12.5px;color:#111;">69627</div><div class="t" style="left:780.00px;top:358.92px;font-size:12.5px;line-height:12.5px;color:#111;">ЗК</div><div class="t" style="left:809.00px;top:358.92px;font-size:12.5px;line-height:12.5px;color:#111;">07.10.24</div><div class="t" style="left:864.50px;top:358.92px;font-size:12.5px;line-height:12.5px;color:#111;">03:34</div><div class="t" style="left:902.00px;top:358.92px;font-size:12.5px;line-height:12.5px;color:#111;letter-spacing:-0.3px">ВИТЕБСКИЙ МЯСОМ...</div><div class="t" style="left:1048.00px;top:358.92px;font-size:12.5px;line-height:12.5px;color:#111;">Склад Поставщика ко...</div><div class="t" style="left:1194.00px;top:358.92px;font-size:12.5px;line-height:12.5px;color:#111;">ЗАО "ЛюксСофтТорг"</div><div class="t" style="left:1340.00px;top:358.92px;font-size:12.5px;line-height:12.5px;color:#111;">Магазин 14</div><div class="r" style="left:272.9px;top:385.0px;width:13px;height:13px;background:#fff;border-radius:3px;"></div><div class="r" style="left:310.9px;top:385.0px;width:13px;height:13px;background:#fff;border-radius:3px;"></div><div class="r" style="left:348.9px;top:385.0px;width:13px;height:13px;background:#fff;border-radius:3px;"></div><div class="r" style="left:498.9px;top:385.0px;width:13px;height:13px;background:#fff;border-radius:3px;"></div><div class="r" style="left:536.9px;top:385.0px;width:13px;height:13px;background:#fff;border-radius:3px;"></div><svg class="r" style="left:575.2px;top:384.7px;" width="13" height="13" viewBox="0 0 13 13"><rect x="0" y="0" width="13" height="13" rx="3" fill="#0d6efd"/><path d="M3.3 6.7L5.5 8.9L9.8 4.5" fill="none" stroke="#fff" stroke-width="1.6" stroke-linecap="round" stroke-linejoin="round"/></svg><div class="t" style="left:605.00px;top:386.92px;font-size:12.5px;line-height:12.5px;color:#111;">В работе</div><div class="t" style="left:717.50px;top:386.92px;font-size:12.5px;line-height:12.5px;color:#111;">69629</div><div class="t" style="left:780.00px;top:386.92px;font-size:12.5px;line-height:12.5px;color:#111;">ЗК</div><div class="t" style="left:809.00px;top:386.92px;font-size:12.5px;line-height:12.5px;color:#111;">07.10.24</div><div class="t" style="left:864.50px;top:386.92px;font-size:12.5px;line-height:12.5px;color:#111;">13:13</div><div class="t" style="left:902.00px;top:386.92px;font-size:12.5px;line-height:12.5px;color:#111;">ЗАО "ЛюксСофтТорг"</div><div class="t" style="left:1048.00px;top:386.92px;font-size:12.5px;line-height:12.5px;color:#111;">Магазин 13</div><div class="t" style="left:1194.00px;top:386.92px;font-size:12.5px;line-height:12.5px;color:#111;">ЗАО "ЛюксСофтТорг"</div><div class="t" style="left:1340.00px;top:386.92px;font-size:12.5px;line-height:12.5px;color:#111;">Магазин 14</div><div class="r" style="left:1482px;top:265px;width:135px;height:140px;overflow:hidden"><div class="t" style="left:4.00px;top:9.22px;font-size:12.5px;line-height:12.5px;color:#111;">Поступление в магази</div><div class="t" style="left:4.00px;top:37.72px;font-size:12.5px;line-height:12.5px;color:#111;">Поступление на магази</div><div class="t" style="left:4.00px;top:65.92px;font-size:12.5px;line-height:12.5px;color:#111;">Поступление в магази</div><div class="t" style="left:4.00px;top:93.92px;font-size:12.5px;line-height:12.5px;color:#111;">Поступление в магази</div><div class="t" style="left:4.00px;top:121.92px;font-size:12.5px;line-height:12.5px;color:#111;">Поступление на магази</div></div><div class="r" style="left:262px;top:374px;width:360px;height:39px;border:3px solid #ff3b3b;box-sizing:border-box;width:1360px"></div><div class="r" style="left:278.2px;top:417px;width:565px;height:12.5px;background:#d9d9d9;"></div><svg class="r" style="left:266px;top:419.5px;" width="6" height="8" viewBox="0 0 6 8"><path d="M5 0.5V7.5L0.8 4Z" fill="#c9c9c9"/></svg><svg class="r" style="left:1606px;top:419.5px;" width="6" height="8" viewBox="0 0 6 8"><path d="M0.8 0.5V7.5L5 4Z" fill="#c9c9c9"/></svg><div class="r" style="left:261px;top:432px;width:1356px;height:1px;background:#dee2e6;"></div><div class="r" style="left:261px;top:441.9px;width:23.5px;height:23.5px;background:#e3e3e3;border-radius:5px;"></div><svg class="r" style="left:264px;top:447.4px;" width="17" height="13" viewBox="0 0 17 13"><g fill="#f8f8f8"><circle cx="1.7" cy="2.2" r="1"/><circle cx="1.7" cy="6.1" r="1"/><circle cx="1.7" cy="10" r="1"/><rect x="5.2" y="1.6" width="10.5" height="1.2" rx="0.6"/><rect x="5.2" y="5.5" width="10.5" height="1.2" rx="0.6"/><rect x="5.2" y="9.4" width="10.5" height="1.2" rx="0.6"/></g></svg><svg class="r" style="left:287.3px;top:448px;" width="17" height="12" viewBox="0 0 17 12"><g fill="none" stroke="#646a70" stroke-width="1.05"><rect x="0.9" y="0.6" width="15" height="10.4" rx="1"/><path d="M0.9 5.8H15.9M5.9 0.6V11M10.9 0.6V11"/></g></svg><svg class="r" style="left:310px;top:446px;" width="17" height="16.5" viewBox="0 0 17 16.5"><g fill="none" stroke="#646a70" stroke-width="1.05"><rect x="0.9" y="1.6" width="15" height="14.2" rx="1.5"/><path d="M0.9 4.4H15.9M3.9 0.3V2.6M12.9 0.3V2.6"/></g><g fill="#646a70"><rect x="3.2" y="10.6" width="1.6" height="1.2"/><rect x="5.6" y="10.6" width="1.6" height="1.2"/><rect x="9.4" y="7.6" width="1.6" height="1.2"/><rect x="11.8" y="7.6" width="1.6" height="1.2"/></g></svg><svg class="r" style="left:342.8px;top:446.5px;" width="15" height="15" viewBox="0 0 15 15"><path d="M1 1.2H14L8.6 7.6V13.6L6.4 12.6V7.6Z" fill="none" stroke="#646a70" stroke-width="1.05" stroke-linejoin="round"/></svg><svg class="r" style="left:374px;top:445.2px;" width="17" height="17" viewBox="0 0 17 17"><path d="M7 0.8H10L10.5 3Q11.5 3.4 12.3 4L14.4 3.2L15.9 5.8L14.2 7.3Q14.3 8.5 14.2 9.7L15.9 11.2L14.4 13.8L12.3 13Q11.5 13.6 10.5 14L10 16.2H7L6.5 14Q5.5 13.6 4.7 13L2.6 13.8L1.1 11.2L2.8 9.7Q2.7 8.5 2.8 7.3L1.1 5.8L2.6 3.2L4.7 4Q5.5 3.4 6.5 3Z" fill="none" stroke="#646a70" stroke-width="1.05" stroke-linejoin="round"/><circle cx="8.5" cy="8.5" r="2.6" fill="none" stroke="#646a70" stroke-width="1.05"/></svg><div class="t" style="left:405.70px;top:449.31px;font-size:10.5px;line-height:10.5px;color:#4f555b;">123</div><svg class="r" style="left:431.3px;top:447.5px;" width="13" height="13" viewBox="0 0 13 13"><path d="M6.5 0.5V12.5M0.5 6.5H12.5" stroke="#646a70" stroke-width="1.1"/></svg><svg class="r" style="left:460.5px;top:446.5px;" width="18" height="15" viewBox="0 0 18 15"><g fill="none" stroke="#646a70" stroke-width="1.15" stroke-linecap="round" stroke-linejoin="round"><path d="M9 0.8V10M5 6.5L9 10.3L13 6.5"/><path d="M1 9V13.8H17V9"/></g></svg><svg class="r" style="left:492.5px;top:447px;" width="18" height="14" viewBox="0 0 18 14"><g fill="none" stroke="#646a70" stroke-width="1.15" stroke-linecap="round" stroke-linejoin="round"><path d="M1 7.5V6Q1 3 4 3H15.5M13 0.8L15.5 3L13 5.2"/><path d="M17 6.5V8Q17 11 14 11H2.5M5 8.8L2.5 11L5 13.2"/></g></svg><svg class="r" style="left:976.7px;top:446.7px;" width="13" height="13" viewBox="0 0 13 13"><rect x="0" y="0" width="13" height="13" rx="3" fill="#0d6efd"/><path d="M3.3 6.7L5.5 8.9L9.8 4.5" fill="none" stroke="#fff" stroke-width="1.6" stroke-linecap="round" stroke-linejoin="round"/></svg><div class="t" style="left:994.30px;top:447.92px;font-size:12.5px;line-height:12.5px;color:#212529;">Открыт (F6)</div><div class="r" style="left:1091px;top:447.3px;width:12.6px;height:12.6px;background:#fff;border:1px solid #dee2e6;box-sizing:border-box;border-radius:3px;"></div><div class="t" style="left:1108.00px;top:447.92px;font-size:12.5px;line-height:12.5px;color:#212529;">Автозаказ (F7)</div><div class="r" style="left:1197px;top:441.3px;width:73.5px;height:24.5px;border:1px solid #6c757d;box-sizing:border-box;border-radius:5px;"></div><div class="t" style="left:1210.00px;top:449.12px;font-size:12.5px;line-height:12.5px;color:#6c757d;">Закрыть</div><div class="r" style="left:1278.8px;top:441.1px;width:100.8px;height:24.7px;background:#0d6efd;border-radius:5px;"></div><svg class="r" style="left:1294.5px;top:448.5px;" width="8" height="8" viewBox="0 0 8 8"><path d="M4 0.5V7.5M0.5 4H7.5" stroke="#fff" stroke-width="1.2"/></svg><div class="t" style="left:1310.50px;top:449.12px;font-size:12.5px;line-height:12.5px;color:#fff;">Добавить</div><svg class="r" style="left:1400.5px;top:445.5px;" width="14" height="14" viewBox="0 0 14 14"><g fill="none" stroke="#0d6efd" stroke-width="1.3" stroke-linejoin="round"><path d="M7 1.8H2.3Q1.3 1.8 1.3 2.8V11.7Q1.3 12.7 2.3 12.7H11.2Q12.2 12.7 12.2 11.7V7"/><path d="M11 1L13 3L7 9H5V7Z"/></g></svg><div class="t" style="left:1420.00px;top:449.12px;font-size:12.5px;line-height:12.5px;color:#0d6efd;">Редактировать</div><div class="r" style="left:1527px;top:441.3px;width:90px;height:24.5px;border:1px solid #6c757d;box-sizing:border-box;border-radius:5px;"></div><div class="r" style="left:1540px;top:451.5px;width:10.5px;height:1.4px;background:#6c757d;"></div><div class="t" style="left:1557.40px;top:449.12px;font-size:12.5px;line-height:12.5px;color:#6c757d;">Удалить</div><div class="r" style="left:377px;top:500px;width:1240px;height:1px;background:#dee2e6;"></div><div class="r" style="left:257px;top:475px;width:121px;height:26px;background:#fff;border:1px solid #dee2e6;border-bottom:none;border-radius:7px 7px 0 0;box-sizing:border-box"></div><div class="t" style="left:273.90px;top:482.82px;font-size:12.5px;line-height:12.5px;color:#212529;">Спецификация</div><svg class="r" style="left:395px;top:481px;" width="11" height="13" viewBox="0 0 11 13"><g fill="none" stroke="#6c757d" stroke-width="1.1"><path d="M1 1.5Q1 0.6 1.9 0.6H6.8L10 3.8V11.6Q10 12.4 9.1 12.4H1.9Q1 12.4 1 11.6Z"/><path d="M3 6.5H8M3 8.5H8M3 10.3H6.5"/></g></svg><div class="t" style="left:411.20px;top:482.82px;font-size:12.5px;line-height:12.5px;color:#6c757d;">История</div><svg class="r" style="left:494.5px;top:481.3px;" width="12" height="12" viewBox="0 0 12 12"><rect x="0.6" y="0.6" width="10.8" height="10.8" rx="1.5" fill="none" stroke="#6c757d" stroke-width="1.1"/><path d="M4.3 3.3V8.7L8.3 6Z" fill="#6c757d"/></svg><div class="t" style="left:511.70px;top:482.82px;font-size:12.5px;line-height:12.5px;color:#6c757d;">Действия</div><div class="r" style="left:261px;top:510px;width:1356px;height:115px;background:#fff;"></div><div class="r" style="left:261px;top:566.5px;width:1356px;height:1px;background:#dee2e6;"></div><div class="r" style="left:261px;top:596.5px;width:1356px;height:1px;background:#dee2e6;"></div><div class="r" style="left:261px;top:625px;width:1356px;height:1px;background:#dee2e6;"></div><div class="r" style="left:261px;top:567.5px;width:1356px;height:29px;background:#e3e3e3;"></div><div class="r" style="left:1093.2px;top:567.5px;width:55.6px;height:29px;background:#e5a800;"></div><div class="r" style="left:1093.2px;top:597.5px;width:55.6px;height:27.5px;background:#ffb900;"></div><div class="r" style="left:1148.8px;top:567.5px;width:55.9px;height:29px;background:#c2e1c2;"></div><div class="r" style="left:1148.8px;top:597.5px;width:55.9px;height:27.5px;background:#d7fdd7;"></div><div class="r" style="left:1204.7px;top:567.5px;width:56.3px;height:29px;background:#e3c7e3;"></div><div class="r" style="left:1204.7px;top:597.5px;width:56.3px;height:27.5px;background:#fde1fd;"></div><div class="r" style="left:1337.8px;top:567.5px;width:56px;height:29px;background:#c2e1c2;"></div><div class="r" style="left:1337.8px;top:597.5px;width:56px;height:27.5px;background:#d7fdd7;"></div><svg class="r" style="left:265.5px;top:533px;" width="15" height="12" viewBox="0 0 15 12"><path d="M3 11V1.5M0.5 4L3 1.2L5.5 4" fill="none" stroke="#222" stroke-width="1.6" stroke-linecap="round" stroke-linejoin="round"/><g fill="#222"><rect x="8" y="0.3" width="1.8" height="1.5"/><rect x="8" y="3.4" width="3.5" height="1.5"/><rect x="8" y="6.6" width="5" height="1.5"/><rect x="8" y="9.8" width="6.5" height="1.5"/></g></svg><div class="r" style="left:284px;top:510px;width:36.5px;height:56px;overflow:hidden"><div class="t" style="left:0.00px;top:14.99px;font-size:11px;line-height:11px;color:#000;font-weight:700;">Номер</div><div class="t" style="left:0.00px;top:32.29px;font-size:11px;line-height:11px;color:#000;font-weight:700;">строки</div></div><div class="t" style="left:328.40px;top:534.09px;font-size:11px;line-height:11px;color:#000;font-weight:700;">Штрихкод</div><div class="t" style="left:440.80px;top:534.09px;font-size:11px;line-height:11px;color:#000;font-weight:700;">Код</div><div class="t" style="left:517.50px;top:534.09px;font-size:11px;line-height:11px;color:#000;font-weight:700;">Наименование</div><div class="t" style="left:732.50px;top:525.59px;font-size:11px;line-height:11px;color:#000;font-weight:700;">Ед.</div><div class="t" style="left:732.50px;top:542.59px;font-size:11px;line-height:11px;color:#000;font-weight:700;">изм</div><div class="t" style="left:761.80px;top:534.09px;font-size:11px;line-height:11px;color:#000;font-weight:700;">Партия</div><div class="t" style="left:907.50px;top:525.59px;font-size:11px;line-height:11px;color:#000;font-weight:700;">Штрихкод</div><div class="t" style="left:907.50px;top:542.59px;font-size:11px;line-height:11px;color:#000;font-weight:700;">упаковки</div><div class="t" style="left:1019.60px;top:517.09px;font-size:11px;line-height:11px;color:#000;font-weight:700;">Ед.</div><div class="t" style="left:1019.60px;top:534.09px;font-size:11px;line-height:11px;color:#000;font-weight:700;">изм</div><div class="t" style="left:1019.60px;top:551.09px;font-size:11px;line-height:11px;color:#000;font-weight:700;">у...</div><div class="t" style="left:968.70px;width:120px;text-align:right;top:517.09px;font-size:11px;line-height:11px;color:#000;font-weight:700;">Кол-во</div><div class="t" style="left:968.70px;width:120px;text-align:right;top:534.09px;font-size:11px;line-height:11px;color:#000;font-weight:700;">в</div><div class="t" style="left:968.70px;width:120px;text-align:right;top:551.09px;font-size:11px;line-height:11px;color:#000;font-weight:700;">упа-</div><div class="t" style="left:1024.70px;width:120px;text-align:right;top:517.09px;font-size:11px;line-height:11px;color:#000;font-weight:700;">Кол-во</div><div class="t" style="left:1024.70px;width:120px;text-align:right;top:534.09px;font-size:11px;line-height:11px;color:#000;font-weight:700;">упако-</div><div class="t" style="left:1024.70px;width:120px;text-align:right;top:551.09px;font-size:11px;line-height:11px;color:#000;font-weight:700;">вок</div><div class="t" style="left:1080.80px;width:120px;text-align:right;top:534.09px;font-size:11px;line-height:11px;color:#000;font-weight:700;">Кол-во</div><div class="t" style="left:1136.80px;width:120px;text-align:right;top:517.09px;font-size:11px;line-height:11px;color:#000;font-weight:700;">Кол-во</div><div class="t" style="left:1136.80px;width:120px;text-align:right;top:534.09px;font-size:11px;line-height:11px;color:#000;font-weight:700;">(постав-</div><div class="t" style="left:1136.80px;width:120px;text-align:right;top:551.09px;font-size:11px;line-height:11px;color:#000;font-weight:700;">лено)</div><div class="t" style="left:1265.50px;top:534.09px;font-size:11px;line-height:11px;color:#000;font-weight:700;">Вид цен</div><div class="t" style="left:1269.80px;width:120px;text-align:right;top:534.09px;font-size:11px;line-height:11px;color:#000;font-weight:700;">Цена</div><div class="t" style="left:1339.70px;width:120px;text-align:right;top:534.09px;font-size:11px;line-height:11px;color:#000;font-weight:700;">Сумма</div><div class="t" style="left:1375.80px;width:120px;text-align:right;top:517.09px;font-size:11px;line-height:11px;color:#000;font-weight:700;">НДС,</div><div class="t" style="left:1375.80px;width:120px;text-align:right;top:534.09px;font-size:11px;line-height:11px;color:#000;font-weight:700;">но-</div><div class="t" style="left:1375.80px;width:120px;text-align:right;top:551.09px;font-size:11px;line-height:11px;color:#000;font-weight:700;">мер</div><div class="t" style="left:1431.50px;width:120px;text-align:right;top:534.09px;font-size:11px;line-height:11px;color:#000;font-weight:700;">НДС, %</div><div class="t" style="left:1488.00px;width:120px;text-align:right;top:525.59px;font-size:11px;line-height:11px;color:#000;font-weight:700;">Цена с</div><div class="t" style="left:1488.00px;width:120px;text-align:right;top:542.59px;font-size:11px;line-height:11px;color:#000;font-weight:700;">НДС</div><div class="t" style="left:280.00px;width:40px;text-align:right;top:577.72px;font-size:12.5px;line-height:12.5px;color:#111;">1</div><div class="t" style="left:328.40px;top:577.72px;font-size:12.5px;line-height:12.5px;color:#111;">4007415005602</div><div class="t" style="left:440.80px;top:577.72px;font-size:12.5px;line-height:12.5px;color:#111;">11</div><div class="t" style="left:517.50px;top:577.72px;font-size:12.5px;line-height:12.5px;color:#111;letter-spacing:-0.28px">АБРИКОСЫ МИКАДО ПОЛОВ.В С...</div><div class="t" style="left:732.50px;top:577.72px;font-size:12.5px;line-height:12.5px;color:#111;">п...</div><div class="t" style="left:907.00px;top:577.72px;font-size:12.5px;line-height:12.5px;color:#111;">4007415005602</div><div class="t" style="left:1019.50px;top:577.72px;font-size:12.5px;line-height:12.5px;color:#111;">п...</div><div class="t" style="left:1028.70px;width:60px;text-align:right;top:577.72px;font-size:12.5px;line-height:12.5px;color:#111;">1</div><div class="t" style="left:1084.70px;width:60px;text-align:right;top:577.72px;font-size:12.5px;line-height:12.5px;color:#111;">10</div><div class="t" style="left:1140.80px;width:60px;text-align:right;top:577.72px;font-size:12.5px;line-height:12.5px;color:#111;">10</div><div class="t" style="left:1265.50px;top:577.72px;font-size:12.5px;line-height:12.5px;color:#111;letter-spacing:-0.2px">Поставщи...</div><div class="t" style="left:1329.80px;width:60px;text-align:right;top:577.72px;font-size:12.5px;line-height:12.5px;color:#111;">15,00</div><div class="t" style="left:1399.70px;width:60px;text-align:right;top:577.72px;font-size:12.5px;line-height:12.5px;color:#111;">150,00</div><div class="t" style="left:1435.80px;width:60px;text-align:right;top:577.72px;font-size:12.5px;line-height:12.5px;color:#111;">4</div><div class="t" style="left:1491.50px;width:60px;text-align:right;top:577.72px;font-size:12.5px;line-height:12.5px;color:#111;">10</div><div class="t" style="left:1548.00px;width:60px;text-align:right;top:577.72px;font-size:12.5px;line-height:12.5px;color:#111;">16,50</div><div class="t" style="left:280.00px;width:40px;text-align:right;top:606.72px;font-size:12.5px;line-height:12.5px;color:#111;">2</div><div class="t" style="left:328.40px;top:606.72px;font-size:12.5px;line-height:12.5px;color:#111;">4811028000363</div><div class="t" style="left:440.80px;top:606.72px;font-size:12.5px;line-height:12.5px;color:#111;">2</div><div class="t" style="left:517.50px;top:606.72px;font-size:12.5px;line-height:12.5px;color:#111;letter-spacing:-0.28px">АБРИКОС БЕЛЫЙ ПЕЛИКАН СУШ...</div><div class="t" style="left:732.50px;top:606.72px;font-size:12.5px;line-height:12.5px;color:#111;">п...</div><div class="t" style="left:907.00px;top:606.72px;font-size:12.5px;line-height:12.5px;color:#111;"></div><div class="t" style="left:1019.50px;top:606.72px;font-size:12.5px;line-height:12.5px;color:#111;">п...</div><div class="t" style="left:1028.70px;width:60px;text-align:right;top:606.72px;font-size:12.5px;line-height:12.5px;color:#111;">90</div><div class="t" style="left:1084.70px;width:60px;text-align:right;top:606.72px;font-size:12.5px;line-height:12.5px;color:#111;">0,11111</div><div class="t" style="left:1140.80px;width:60px;text-align:right;top:606.72px;font-size:12.5px;line-height:12.5px;color:#111;">10</div><div class="t" style="left:1265.50px;top:606.72px;font-size:12.5px;line-height:12.5px;color:#111;letter-spacing:-0.2px">Поставщи...</div><div class="t" style="left:1329.80px;width:60px;text-align:right;top:606.72px;font-size:12.5px;line-height:12.5px;color:#111;">13,00</div><div class="t" style="left:1399.70px;width:60px;text-align:right;top:606.72px;font-size:12.5px;line-height:12.5px;color:#111;">130,00</div><div class="t" style="left:1435.80px;width:60px;text-align:right;top:606.72px;font-size:12.5px;line-height:12.5px;color:#111;">5</div><div class="t" style="left:1491.50px;width:60px;text-align:right;top:606.72px;font-size:12.5px;line-height:12.5px;color:#111;">20</div><div class="t" style="left:1548.00px;width:60px;text-align:right;top:606.72px;font-size:12.5px;line-height:12.5px;color:#111;">15,60</div><div class="r" style="left:278.2px;top:720.8px;width:1083.6px;height:12.9px;background:#d9d9d9;"></div><svg class="r" style="left:266px;top:723.5px;" width="6" height="8" viewBox="0 0 6 8"><path d="M5 0.5V7.5L0.8 4Z" fill="#c9c9c9"/></svg><svg class="r" style="left:1606px;top:723.5px;" width="6" height="8" viewBox="0 0 6 8"><path d="M0.8 0.5V7.5L5 4Z" fill="#c9c9c9"/></svg><div class="r" style="left:261px;top:736px;width:1356px;height:1px;background:#dee2e6;"></div><div class="r" style="left:261px;top:741.4px;width:23.5px;height:23.5px;background:#e3e3e3;border-radius:5px;"></div><svg class="r" style="left:264px;top:746.9px;" width="17" height="13" viewBox="0 0 17 13"><g fill="#f8f8f8"><circle cx="1.7" cy="2.2" r="1"/><circle cx="1.7" cy="6.1" r="1"/><circle cx="1.7" cy="10" r="1"/><rect x="5.2" y="1.6" width="10.5" height="1.2" rx="0.6"/><rect x="5.2" y="5.5" width="10.5" height="1.2" rx="0.6"/><rect x="5.2" y="9.4" width="10.5" height="1.2" rx="0.6"/></g></svg><svg class="r" style="left:287px;top:746.8px;" width="17" height="12" viewBox="0 0 17 12"><g fill="none" stroke="#646a70" stroke-width="1.05"><rect x="0.9" y="0.6" width="15" height="10.4" rx="1"/><path d="M0.9 5.8H15.9M5.9 0.6V11M10.9 0.6V11"/></g></svg><svg class="r" style="left:320px;top:745.5px;" width="15" height="15" viewBox="0 0 15 15"><path d="M1 1.2H14L8.6 7.6V13.6L6.4 12.6V7.6Z" fill="none" stroke="#646a70" stroke-width="1.05" stroke-linejoin="round"/></svg><svg class="r" style="left:351px;top:744.5px;" width="17" height="17" viewBox="0 0 17 17"><path d="M7 0.8H10L10.5 3Q11.5 3.4 12.3 4L14.4 3.2L15.9 5.8L14.2 7.3Q14.3 8.5 14.2 9.7L15.9 11.2L14.4 13.8L12.3 13Q11.5 13.6 10.5 14L10 16.2H7L6.5 14Q5.5 13.6 4.7 13L2.6 13.8L1.1 11.2L2.8 9.7Q2.7 8.5 2.8 7.3L1.1 5.8L2.6 3.2L4.7 4Q5.5 3.4 6.5 3Z" fill="none" stroke="#646a70" stroke-width="1.05" stroke-linejoin="round"/><circle cx="8.5" cy="8.5" r="2.6" fill="none" stroke="#646a70" stroke-width="1.05"/></svg><div class="t" style="left:382.70px;top:748.41px;font-size:10.5px;line-height:10.5px;color:#4f555b;">123</div><svg class="r" style="left:408.3px;top:746.5px;" width="13" height="13" viewBox="0 0 13 13"><path d="M6.5 0.5V12.5M0.5 6.5H12.5" stroke="#646a70" stroke-width="1.1"/></svg><svg class="r" style="left:437.3px;top:745.5px;" width="18" height="15" viewBox="0 0 18 15"><g fill="none" stroke="#646a70" stroke-width="1.15" stroke-linecap="round" stroke-linejoin="round"><path d="M9 0.8V10M5 6.5L9 10.3L13 6.5"/><path d="M1 9V13.8H17V9"/></g></svg><svg class="r" style="left:469.8px;top:746px;" width="18" height="14" viewBox="0 0 18 14"><g fill="none" stroke="#646a70" stroke-width="1.15" stroke-linecap="round" stroke-linejoin="round"><path d="M1 7.5V6Q1 3 4 3H15.5M13 0.8L15.5 3L13 5.2"/><path d="M17 6.5V8Q17 11 14 11H2.5M5 8.8L2.5 11L5 13.2"/></g></svg><div class="r" style="left:1425.2px;top:746.6px;width:12.4px;height:12.4px;background:#fff;border:1px solid #dee2e6;box-sizing:border-box;border-radius:3px;"></div><div class="t" style="left:1442.90px;top:746.82px;font-size:12.5px;line-height:12.5px;color:#212529;">Непоставленные товары (F10)</div><div class="r" style="left:257px;top:770px;width:1364px;height:1px;background:#dee2e6;"></div><svg class="r" style="left:278px;top:787.5px;" width="4" height="12" viewBox="0 0 4 12"><g fill="#333"><circle cx="2" cy="1.5" r="1.3"/><circle cx="2" cy="6" r="1.3"/><circle cx="2" cy="10.5" r="1.3"/></g></svg><div class="r" style="left:307.3px;top:786.4px;width:14px;height:13.5px;background:#fff;border:1px solid #dee2e6;box-sizing:border-box;border-radius:3px;"></div><div class="t" style="left:330.30px;top:789.82px;font-size:12.5px;line-height:12.5px;color:#212529;letter-spacing:0.2px">Включить корректировку на форме</div><div class="r" style="left:1184.2px;top:781.2px;width:38.5px;height:24.5px;border:1px solid #495057;box-sizing:border-box;border-radius:5px;"></div><svg class="r" style="left:1198px;top:787px;" width="13" height="12" viewBox="0 0 13 12"><g fill="none" stroke="#444" stroke-width="1.3" stroke-linecap="round"><path d="M1.8 5.2A4.6 4.6 0 0 1 10.3 3.2"/><path d="M11.2 6.8A4.6 4.6 0 0 1 2.7 8.8"/></g><path d="M8.6 1.6L11.2 4.2L11.6 0.8Z" fill="#444"/><path d="M4.4 10.4L1.8 7.8L1.4 11.2Z" fill="#444"/></svg><div class="r" style="left:1230.9px;top:781.2px;width:106.8px;height:24.5px;border:1px solid #6ea8fe;box-sizing:border-box;border-radius:5px;"></div><svg class="r" style="left:1243px;top:785.5px;" width="14" height="14" viewBox="0 0 14 14"><g fill="none" stroke="#6ea8fe" stroke-width="1.1" stroke-linejoin="round"><path d="M4.5 1H1.8Q0.8 1 0.8 2V12.2Q0.8 13.2 1.8 13.2H12.2Q13.2 13.2 13.2 12.2V2Q13.2 1 12.2 1H9.5"/><path d="M7 0.3V8.5M4.3 6L7 8.7L9.7 6"/></g></svg><div class="t" style="left:1263.00px;top:788.72px;font-size:12.5px;line-height:12.5px;color:#6ea8fe;">Сохранить</div><div class="r" style="left:1346.1px;top:781.2px;width:101.5px;height:24.5px;border:1px solid #adb5bd;box-sizing:border-box;border-radius:5px;"></div><svg class="r" style="left:1358.5px;top:786.3px;" width="13.5" height="12.5" viewBox="0 0 13.5 12.5"><g fill="none" stroke="#9aa0a6" stroke-width="1.1"><rect x="0.6" y="0.6" width="12.3" height="3.2"/><path d="M1.6 3.8V11.9H11.9V3.8M4.8 6.5H8.7"/></g></svg><div class="t" style="left:1377.70px;top:788.72px;font-size:12.5px;line-height:12.5px;color:#9aa0a6;">Отменить</div><div class="r" style="left:1456px;top:781.2px;width:59.5px;height:24.5px;background:#0d6efd;border-radius:5px;"></div><svg class="r" style="left:1467.5px;top:787.5px;" width="13" height="10" viewBox="0 0 13 10"><path d="M1.2 4.6L4.4 7.8L11.8 0.9" fill="none" stroke="#fff" stroke-width="2" stroke-linecap="round" stroke-linejoin="round"/></svg><div class="t" style="left:1485.90px;top:788.72px;font-size:12.5px;line-height:12.5px;color:#fff;">OK</div><div class="r" style="left:1523.9px;top:781.2px;width:92.8px;height:24.5px;background:#6c757d;border-radius:5px;"></div><svg class="r" style="left:1540.2px;top:789.2px;" width="7" height="7" viewBox="0 0 7 7"><path d="M0.7 0.7L6.3 6.3M6.3 0.7L0.7 6.3" stroke="#fff" stroke-width="1.2"/></svg><div class="t" style="left:1555.80px;top:788.72px;font-size:12.5px;line-height:12.5px;color:#fff;">Закрыть</div></body></html>
